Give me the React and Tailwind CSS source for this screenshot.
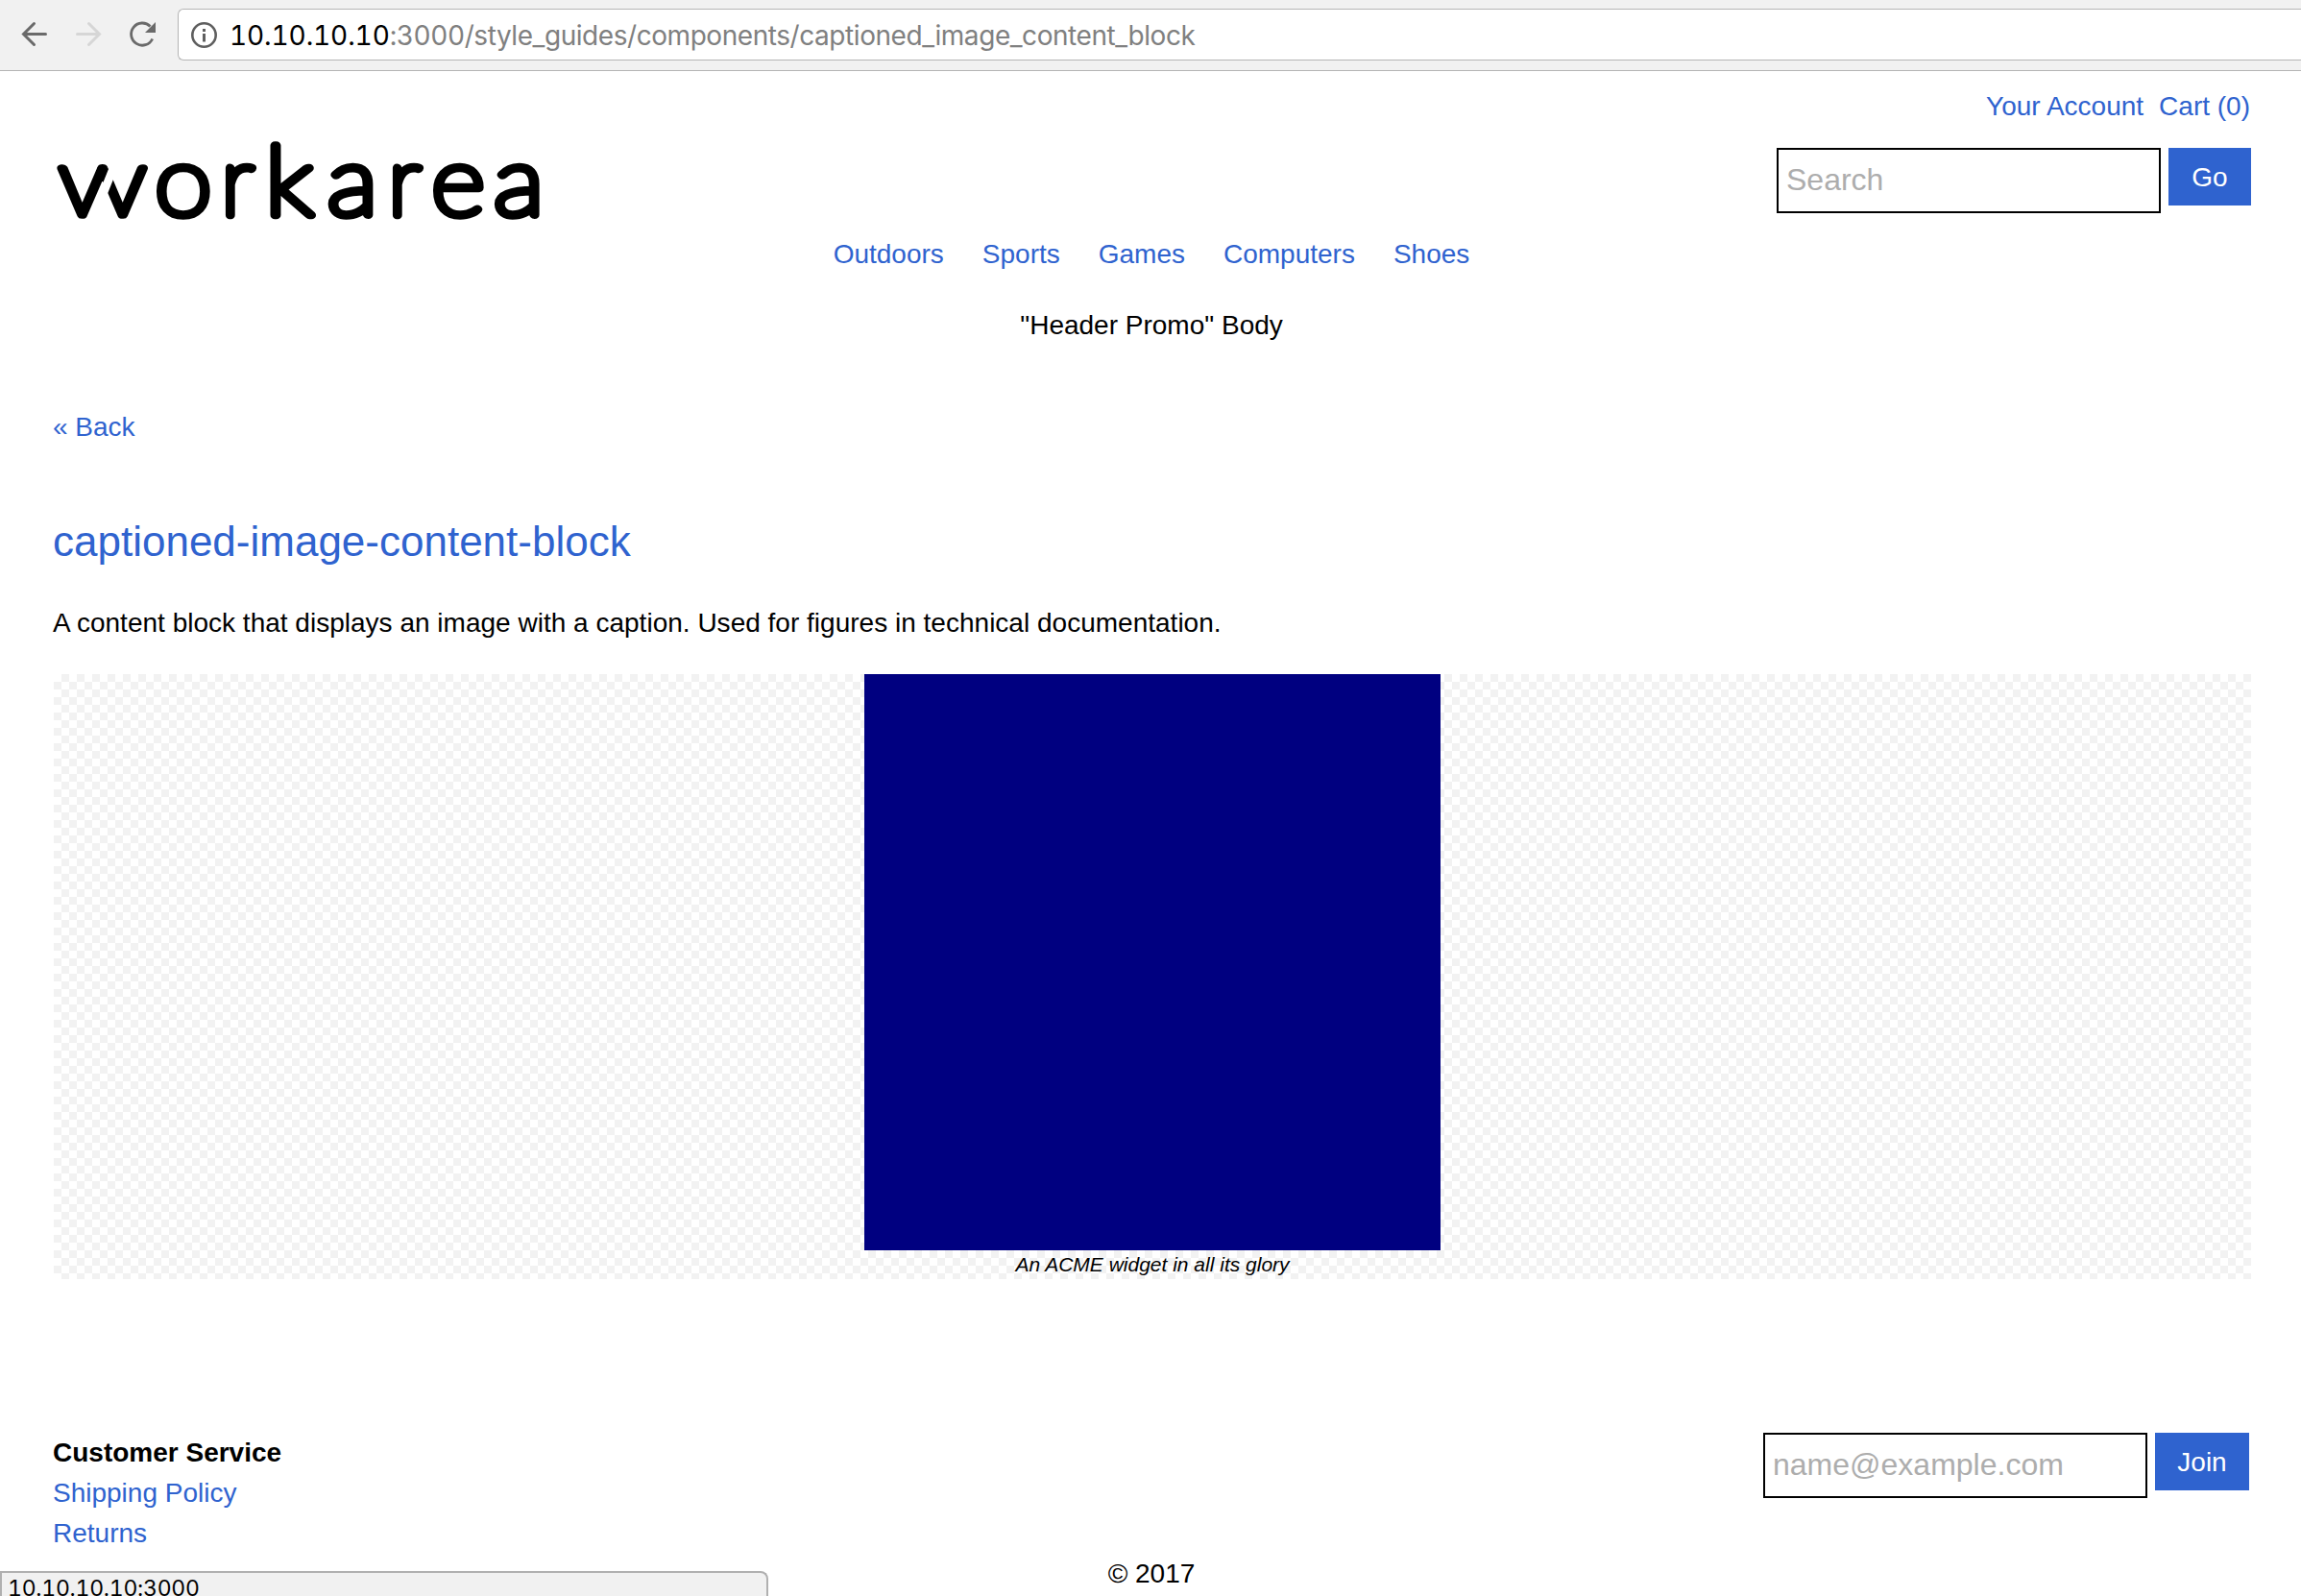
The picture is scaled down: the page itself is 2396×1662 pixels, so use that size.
const link = "text-[#2f63cf]";

function BrowserBar() {
  return (
    <div className="flex h-[74px] items-start border-b border-[#b5b5b5] bg-[#f1f1f1] pl-[22px]">
      <svg width="163" height="73" viewBox="22 0 163 73" fill="none" className="shrink-0">
        <path d="M47.500 35.500H25M35.500 24.500L24.500 35.500L35.500 46.500" stroke="#6a6a6a" strokeWidth="3" strokeLinecap="round" />
        <path d="M80.500 35.500H103M92.500 24.500L103.500 35.500L92.500 46.500" stroke="#d6d6d6" strokeWidth="3" strokeLinecap="round" />
        <path d="M156.500 27.500A11.600 11.600 0 1 0 158.700 40.500" stroke="#6a6a6a" strokeWidth="2.800" />
        <path d="M162 23V34H151Z" fill="#6a6a6a" />
      </svg>
      <div className="mt-[9px] flex h-[54px] flex-1 items-center rounded-l-[6px] border border-r-0 border-[#b5b5b5] bg-white pl-[13px]">
        <svg width="28" height="28" viewBox="0 0 28 28" fill="none" className="shrink-0">
          <circle cx="13.500" cy="14.500" r="12.200" stroke="#5f5f5f" strokeWidth="2.600" />
          <path d="M13.500 13V21.500M13.500 8V11" stroke="#5f5f5f" strokeWidth="3" />
        </svg>
        <span className="ml-[12px] pt-[2px] font-[Inter] text-[28px] leading-[36px] tracking-[-0.44px] whitespace-nowrap text-[#808080] tabular-nums">
          <span className="tracking-[-0.1px] text-black">10.10.10.10</span>
          :3000/style_guides/components/captioned_image_content_block
        </span>
      </div>
    </div>
  );
}

const logoLetters = [
  ["w", 60, 1.25],
  ["o", 160.9, 1.085],
  ["r", 229.9, 1],
  ["k", 276.1, 1.12],
  ["a", 340.7, 1.11],
  ["r", 403.9, 1],
  ["e", 448.9, 1.085],
  ["a", 513.9, 1.11],
];

function Logo() {
  return (
    <svg width="530" height="124" viewBox="50 124 530 124" className="block">
      {logoLetters.map(([letter, x, scale], i) => (
        <text
          key={i}
          transform={`translate(${x} 224.300) scale(${scale} 1)`}
          fontFamily="Lato"
          fontWeight="100"
          fontSize="100"
          stroke="#000"
          strokeWidth={i === 0 ? 7.6 : 8.6}
          strokeLinejoin="round"
        >
          {letter}
        </text>
      ))}
      <path d="M117 166L101 206H110.300L126.300 166Z" fill="#fff" />
    </svg>
  );
}

function Field({ placeholder, action, width }) {
  return (
    <form className="flex items-start gap-2">
      <input
        placeholder={placeholder}
        className="h-[68px] w-[400px] border-2 border-black px-[8px] pb-[2px] text-[32px] placeholder:text-[#adadad]"
      />
      <button type="button" className={"h-[60px] bg-[#2f63cf] pt-[2px] text-[28px] text-white " + width}>
        {action}
      </button>
    </form>
  );
}

export default function App() {
  return (
    <div className="relative h-[1662px] w-[2396px] overflow-hidden bg-white font-['Liberation_Sans',Arial,sans-serif] text-[28px] leading-[42px] text-black">
      <BrowserBar />
      <header className="h-[350px] pr-[52px] pl-[54px] pt-[16px]">
        <div className="flex h-[154px] justify-between">
          <div className="-ml-[4px] pt-[34px]">
            <Logo />
          </div>
          <div className="flex flex-col items-end">
            <nav className={"flex gap-4 pr-px " + link}>
              <a>Your Account</a>
              <a>Cart (0)</a>
            </nav>
            <div className="mt-[22px]">
              <Field placeholder="Search" action="Go" width="w-[86px]" />
            </div>
          </div>
        </div>
        <nav className={"flex justify-center gap-10 " + link}>
          <a>Outdoors</a>
          <a>Sports</a>
          <a>Games</a>
          <a>Computers</a>
          <a>Shoes</a>
        </nav>
        <p className="mt-[32px] text-center">"Header Promo" Body</p>
      </header>
      <main className="mr-[52px] ml-[55px] h-[1068px]">
        <a className={"block " + link}>« Back</a>
        <h1 className={"mt-[65px] text-[44px] leading-[66px] " + link}>captioned-image-content-block</h1>
        <p className="mt-[31px] tracking-[0.01px]">
          A content block that displays an image with a caption. Used for figures in technical documentation.
        </p>
        <figure className="mt-[32px] ml-px flex h-[630px] flex-col items-center bg-[repeating-conic-gradient(#f2f2f2_0_25%,#ffffff_0_50%)] bg-[length:16px_16px]">
          <div className="size-[600px] bg-[#000080]" />
          <figcaption className="text-[21px] leading-[30px] italic">An ACME widget in all its glory</figcaption>
        </figure>
      </main>
      <footer className="pr-[54px] pl-[55px]">
        <div className="flex h-[126px] justify-between">
          <div className="flex flex-col">
            <h2 className="font-bold">Customer Service</h2>
            <a className={link}>Shipping Policy</a>
            <a className={link}>Returns</a>
          </div>
          <Field placeholder="name@example.com" action="Join" width="w-[98px]" />
        </div>
        <p className="pl-px text-center">© 2017</p>
      </footer>
      <div className="absolute bottom-0 left-0 h-[26px] w-[800px] rounded-tr-[8px] border-2 border-b-0 border-[#b0b0b0] bg-[#f1f1f1] pt-[4px] pl-[6px] font-[Inter] text-[23px] leading-[24px] tracking-[-0.25px] tabular-nums">
        10.10.10.10:3000
      </div>
    </div>
  );
}
